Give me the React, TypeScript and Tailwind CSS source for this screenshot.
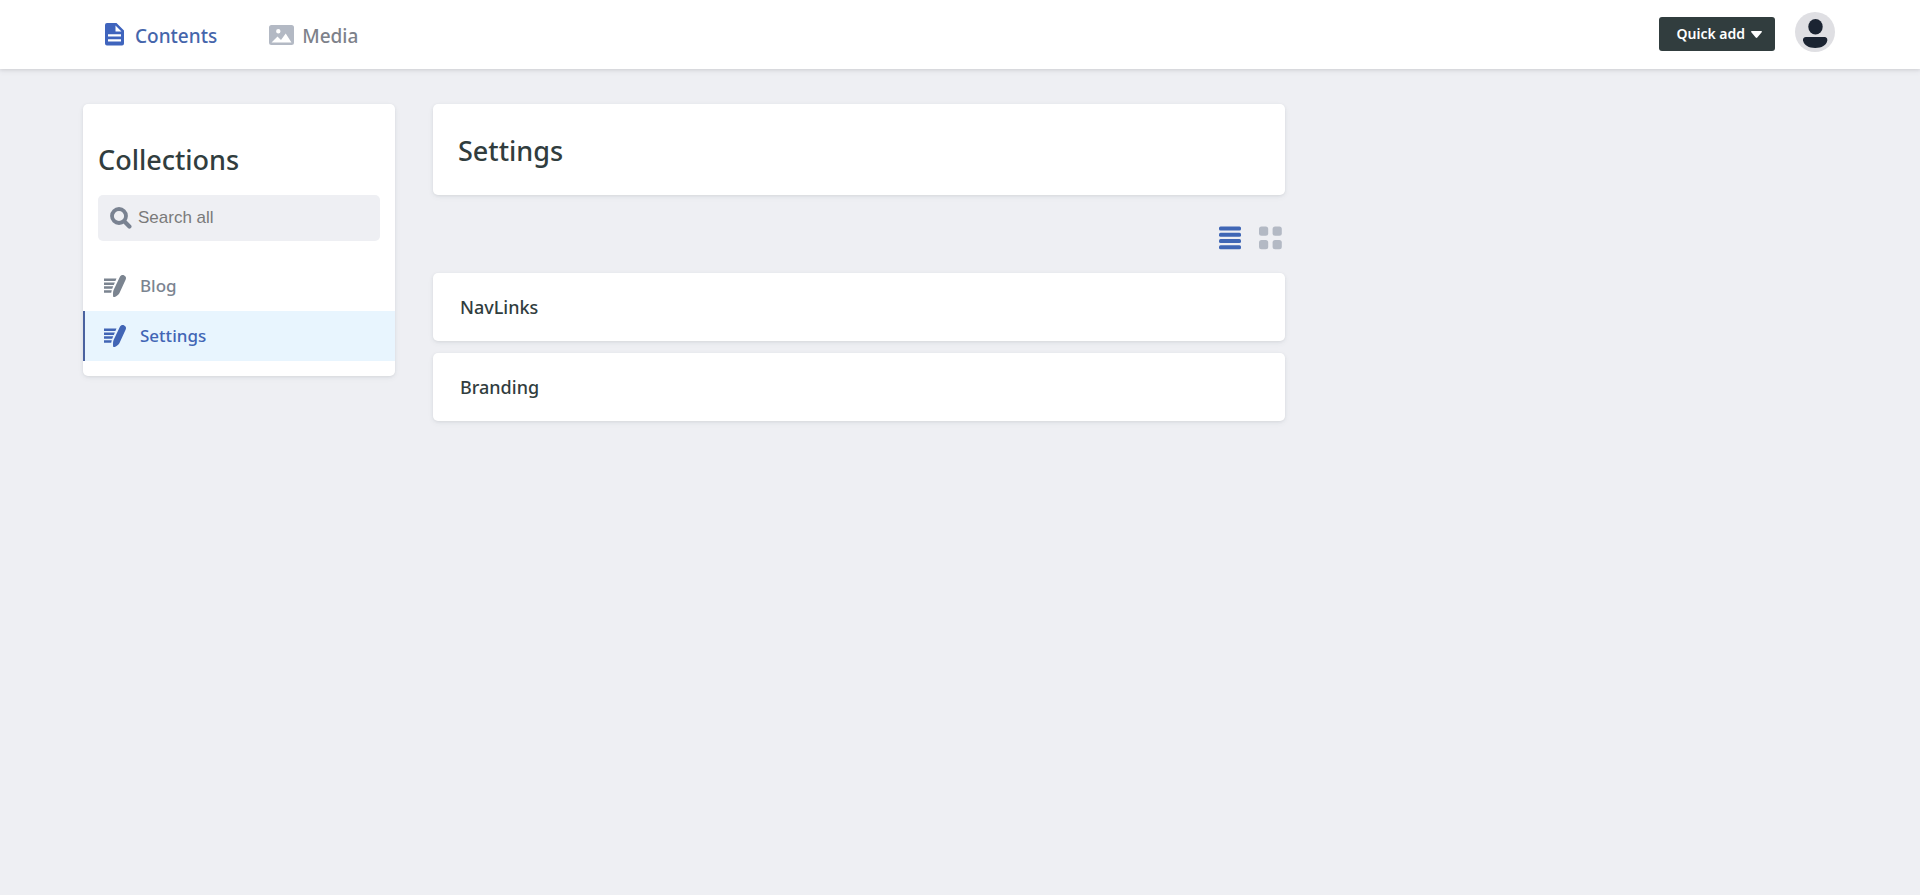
import React from "react";

type IconProps = { className?: string };

function PageIcon({ className }: IconProps) {
  return (
    <svg viewBox="0 0 19 23" className={className} fill="currentColor" aria-hidden="true">
      <path
        fillRule="evenodd"
        d="M2 0H11.5L19 7.5V20.5A2 2 0 0 1 17 22.500H2A2 2 0 0 1 0 20.500V2A2 2 0 0 1 2 0ZM10.500 2.500V8.500H16.500ZM3 11.200V13.400H16V11.200ZM3 16.200V18.400H16V16.200Z"
      />
    </svg>
  );
}

function MediaIcon({ className }: IconProps) {
  return (
    <svg viewBox="0 0 25 20" className={className} fill="currentColor" aria-hidden="true">
      <path
        fillRule="evenodd"
        d="M2.500 0H22.500A2.500 2.500 0 0 1 25 2.500V17.500A2.500 2.500 0 0 1 22.500 20H2.500A2.500 2.500 0 0 1 0 17.500V2.500A2.500 2.500 0 0 1 2.500 0ZM9.300 4A2.200 2.200 0 1 0 9.300 8.400A2.200 2.200 0 1 0 9.300 4ZM2.500 17.500H22.500L16.700 8.500L12 15L8.500 11.500Z"
      />
    </svg>
  );
}

function SearchIcon({ className }: IconProps) {
  return (
    <svg viewBox="0 0 22 22" className={className} fill="none" stroke="currentColor" aria-hidden="true">
      <circle cx="9" cy="9" r="7" strokeWidth="3.800" />
      <path d="M14.200 14.200L19.400 19.400" strokeWidth="4.200" strokeLinecap="round" />
    </svg>
  );
}

function WriteIcon({ className }: IconProps) {
  return (
    <svg viewBox="0 0 22 22" className={className} fill="currentColor" aria-hidden="true">
      <path d="M0 3.500H12.500L11.400 6H0ZM0 7.400H10.900L9.800 9.900H0ZM0 11.300H9.200L8.200 13.800H0ZM0 15.200H7.800L7.200 17.700H0Z" />
      <path d="M15.900 1.800C16.800 .1 18.600-.4 20.200.4C21.900 1.200 22.400 2.700 21.700 4.400L15.500 18C14.700 19.500 12.700 21.100 10.800 22C9.900 22.400 9.200 22.100 9.100 21.200C8.900 19.200 8.900 16.800 9.500 15.300Z" />
    </svg>
  );
}

function ListIcon({ className }: IconProps) {
  return (
    <svg viewBox="0 0 22 24" className={className} fill="currentColor" aria-hidden="true">
      <rect y="0.500" width="22" height="4" rx="1.500" />
      <rect y="6.800" width="22" height="4" rx="1.500" />
      <rect y="13" width="22" height="4" rx="1.500" />
      <rect y="19.300" width="22" height="4" rx="1.500" />
    </svg>
  );
}

function GridIcon({ className }: IconProps) {
  return (
    <svg viewBox="0 0 23 24" className={className} fill="currentColor" aria-hidden="true">
      <rect y="0.500" width="9.200" height="9.200" rx="2.500" />
      <rect x="13.600" y="0.500" width="9.200" height="9.200" rx="2.500" />
      <rect y="14" width="9.200" height="9.200" rx="2.500" />
      <rect x="13.600" y="14" width="9.200" height="9.200" rx="2.500" />
    </svg>
  );
}

function AvatarIcon({ className }: IconProps) {
  return (
    <svg viewBox="0 0 40 40" className={className} fill="currentColor" aria-hidden="true">
      <ellipse cx="20.500" cy="14.800" rx="7.200" ry="7.800" />
      <path d="M11 25H29.500C31.500 25 32.500 26.500 32.300 28.500C31.500 33.300 26.500 36 20.200 36S9 33.300 8 28.500C7.700 26.500 9 25 11 25Z" />
    </svg>
  );
}

const collections = [
  { name: "Blog", active: false },
  { name: "Settings", active: true },
];

const entries = ["NavLinks", "Branding"];

export default function App() {
  return (
    <div className="min-h-screen bg-[#eeeff3] font-['Noto_Sans',sans-serif] font-medium text-[#313d3e]">
      <header className="flex h-[69px] justify-between bg-white pr-[85px] pl-[83px] shadow-[0_2px_6px_rgba(68,68,72,0.08),0_1px_3px_rgba(68,68,72,0.12)]">
        <nav className="flex items-center">
          <a href="#contents" className="flex items-center gap-[11px] px-[22px] text-[#4565ab]">
            <PageIcon className="h-[23px] w-[19px] text-[#3f64bd]" />
            <span className="pt-[3px] text-[19px] leading-6">Contents</span>
          </a>
          <a href="#media" className="flex items-center gap-2 px-[30px] text-[#7d818a]">
            <MediaIcon className="h-5 w-[25px] text-[#b3b9c4]" />
            <span className="pt-[3px] text-[19px] leading-6">Media</span>
          </a>
        </nav>
        <div className="flex items-start gap-5 pt-3">
          <button
            type="button"
            className="mt-[5px] flex h-[34px] items-center gap-[6px] rounded-[3px] bg-[#313d3e] pr-[13px] pl-[17px] text-sm font-semibold text-white"
          >
            Quick add
            <svg viewBox="0 0 11 7" className="h-[7px] w-[11px]" fill="currentColor" aria-hidden="true">
              <path d="M.8 0H10.200C11 0 11.200.6 10.700 1.200L6.300 6.500C5.800 7.100 5.200 7.100 4.700 6.500L.3 1.200C-.2.6 0 0 .8 0Z" />
            </svg>
          </button>
          <button type="button" aria-label="Account" className="size-10 overflow-hidden rounded-full bg-[#dfdfe3] text-[#1b2432]">
            <AvatarIcon className="size-10" />
          </button>
        </div>
      </header>

      <div className="flex items-start gap-[38px] px-[83px] pt-[35px]">
        <aside className="w-[312px] shrink-0 rounded-[5px] bg-white pb-[15px] shadow-[0_2px_6px_rgba(68,74,87,0.05),0_1px_3px_rgba(68,74,87,0.1)]">
          <div className="px-[15px] pt-9">
            <h2 className="text-[27px] leading-10">Collections</h2>
            <label className="mt-[15px] flex h-[46px] items-center gap-[6px] rounded-[5px] bg-[#eeeff3] px-3">
              <SearchIcon className="size-[22px] shrink-0 text-[#798291]" />
              <input
                type="text"
                aria-label="Search all"
                placeholder="Search all"
                className="w-full min-w-0 bg-transparent font-['Liberation_Sans',Arial,sans-serif] text-[17px] font-normal outline-none placeholder:text-[#7a7a7a]"
              />
            </label>
          </div>
          <ul className="mt-5">
            {collections.map((item) => (
              <li key={item.name}>
                <a
                  href={`#${item.name.toLowerCase()}`}
                  className={
                    item.active
                      ? "flex h-[50px] items-center gap-[14px] border-l-2 border-[#4a629f] bg-[#e8f5fe] px-[19px] text-[#4165b5]"
                      : "flex h-[50px] items-center gap-[14px] border-l-2 border-transparent px-[19px] text-[#7b8490]"
                  }
                >
                  <WriteIcon className="size-[22px]" />
                  <span className="text-[17px] leading-6">{item.name}</span>
                </a>
              </li>
            ))}
          </ul>
        </aside>

        <main className="max-w-[852px] min-w-0 flex-1">
          <section className="rounded-[5px] bg-white px-[25px] pt-[27px] pb-6 shadow-[0_2px_6px_rgba(68,74,87,0.05),0_1px_3px_rgba(68,74,87,0.1)]">
            <h1 className="text-[27px] leading-10">Settings</h1>
          </section>
          <div className="flex justify-end gap-[18px] pt-[31px] pr-[3px] pb-[23px]">
            <button type="button" aria-label="List view" className="text-[#3f66b5]">
              <ListIcon className="h-6 w-[22px]" />
            </button>
            <button type="button" aria-label="Grid view" className="text-[#b3b9c4]">
              <GridIcon className="h-6 w-[23px]" />
            </button>
          </div>
          <ul className="flex flex-col gap-3">
            {entries.map((entry) => (
              <li key={entry}>
                <a
                  href={`#${entry.toLowerCase()}`}
                  className="block rounded-[5px] bg-white px-[27px] py-[22px] text-[18px] leading-6 shadow-[0_2px_6px_rgba(68,74,87,0.05),0_1px_3px_rgba(68,74,87,0.1)]"
                >
                  {entry}
                </a>
              </li>
            ))}
          </ul>
        </main>
      </div>
    </div>
  );
}
